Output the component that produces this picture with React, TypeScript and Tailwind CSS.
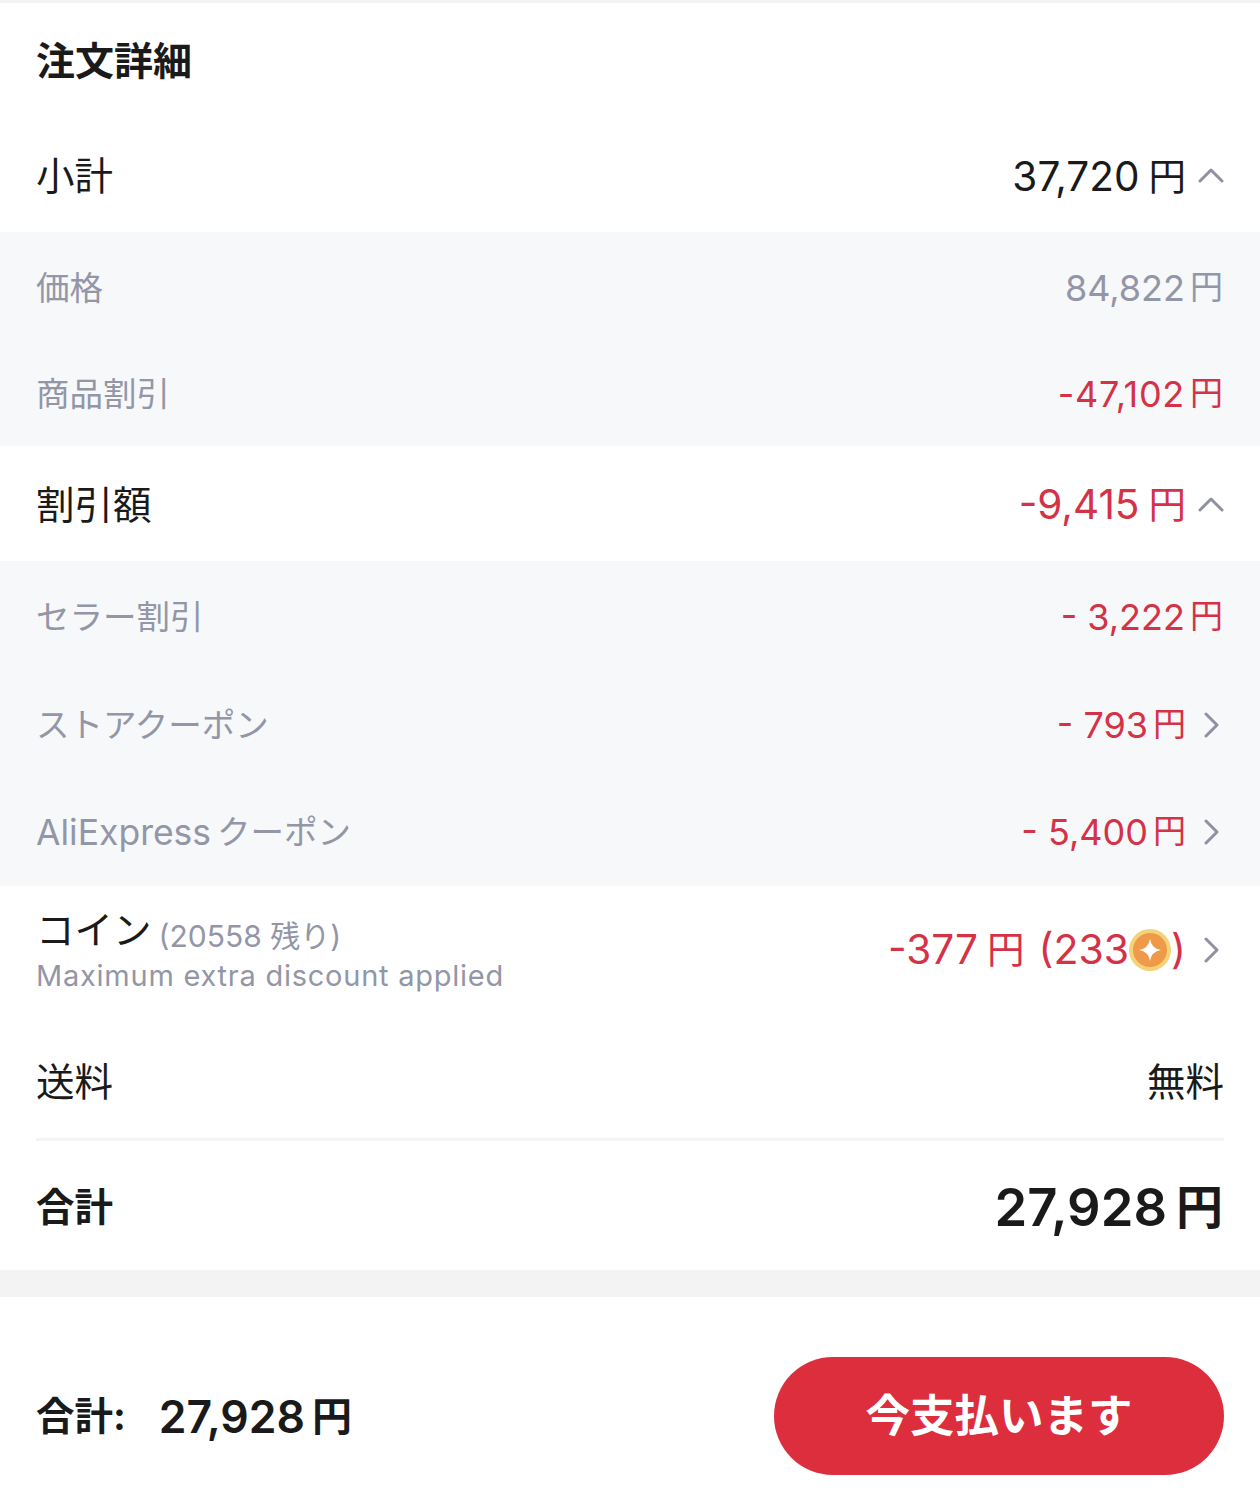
import React from "react";

const font = { fontFamily: '"Inter", "Noto Sans CJK JP", sans-serif' };

function Chevron({ dir }: { dir: "up" | "right" }) {
  return (
    <svg width="26" height="26" viewBox="0 0 26 26" fill="none" stroke="#8f91a3" strokeWidth="3" strokeLinecap="round" strokeLinejoin="round" className={`shrink-0 ${dir === "up" ? "ml-[12px] mb-[4px] mr-[-1px]" : "ml-[12px] mr-[-1px]"}`}>
      {dir === "up" ? <path d="M2 19 L13 8 L24 19" /> : <path d="M8 2 L19 13 L8 24" />}
    </svg>
  );
}

function Yen({ n, big, wide }: { n: string; big?: boolean; wide?: boolean }) {
  return (
    <>
      <span className={`${big ? "text-[40.5px]" : "text-[36px]"} ${wide ? "tracking-[0.7px]" : ""}`}>{n}</span>
      <span className={big ? "text-[37.5px] ml-[9px]" : "text-[33px] ml-[5px]"}>円</span>
    </>
  );
}

function Sub({ label, latin, value, red, chevron, wide, h }: { label: string; latin?: string; value: string; red?: boolean; chevron?: boolean; wide?: boolean; h: string }) {
  return (
    <div className={`flex items-center justify-between pl-[36px] pr-[37px] pt-[2px] ${h}`}>
      <span className="text-[33.5px] text-[#9396a6] flex items-center">
        {latin && <span className="text-[35.5px] mr-[6px]">{latin}</span>}
        {label}
      </span>
      <span className={`flex items-center mb-[1px] ${red ? "text-[#d43247]" : "text-[#9396a6]"}`}>
        <Yen n={value} wide={wide} />
        {chevron && <Chevron dir="right" />}
      </span>
    </div>
  );
}

export default function App() {
  return (
    <div style={font} className="w-[1260px] h-[1512px] bg-white text-[#1a1a1a] overflow-hidden">
      <div className="h-[3px] bg-[#f3f3f3]" />
      <div className="h-[117px] pl-[36px] flex items-center text-[39px] font-bold">注文詳細</div>

      <div className="h-[112px] pl-[36px] pr-[37px] pt-[2px] flex items-center justify-between">
        <span className="text-[38.5px]">小計</span>
        <span className="flex items-center"><Yen n="37,720" big /><Chevron dir="up" /></span>
      </div>

      <div className="bg-[#f7f8fa] pt-[3px]">
        <Sub label="価格" value="84,822" h="h-[105px]" />
        <Sub label="商品割引" value="-47,102" red wide h="h-[106px]" />
      </div>

      <div className="h-[115px] pl-[36px] pr-[37px] pt-[4px] flex items-center justify-between">
        <span className="text-[38.5px]">割引額</span>
        <span className="flex items-center text-[#d43247]"><Yen n="-9,415" big /><Chevron dir="up" /></span>
      </div>

      <div className="bg-[#f7f8fa]">
        <Sub label="セラー割引" value="- 3,222" h="h-[110px]" red />
        <Sub label="ストアクーポン" value="- 793" red chevron h="h-[106px]" />
        <Sub label="クーポン" latin="AliExpress" value="- 5,400" red chevron h="h-[109px]" />
      </div>

      <div className="h-[134px] pl-[36px] pr-[37px] pb-[6px] flex items-center justify-between">
        <div className="flex flex-col">
          <div className="flex items-center h-[50px]">
            <span className="text-[38.5px]">コイン</span>
            <span className="text-[30px] text-[#9396a6] ml-[7px] pt-[11px]">(20558 残り)</span>
          </div>
          <span className="text-[29px] leading-[38px] tracking-[0.75px] text-[#9396a6] mt-[1px]">Maximum extra discount applied</span>
        </div>
        <span className="flex items-center text-[#d43247]">
          <Yen n="-377" big />
          <span className="text-[41px] ml-[14px]">(233</span>
          <svg width="42" height="42" viewBox="0 0 42 42" className="shrink-0">
            <circle cx="21" cy="21" r="21" fill="#f4d27a" />
            <circle cx="21" cy="21" r="17" fill="#ef9a48" />
            <path d="M21 10 Q22.5 19.5 32 21 Q22.5 22.5 21 32 Q19.5 22.5 10 21 Q19.5 19.5 21 10 Z" fill="#fff" />
          </svg>
          <span className="text-[41px]">)</span>
          <Chevron dir="right" />
        </span>
      </div>

      <div className="h-[121px] ml-[36px] mr-[36px] pt-[7px] flex items-center justify-between border-b-[3px] border-[#f3f4f6]">
        <span className="text-[38.5px]">送料</span>
        <span className="text-[38.5px]">無料</span>
      </div>

      <div className="h-[129px] pl-[36px] pr-[37px] pt-[4px] flex items-center justify-between">
        <span className="text-[38.5px] font-bold">合計</span>
        <span className="font-semibold flex items-center">
          <span className="text-[52.5px]">27,928</span>
          <span className="text-[47px] ml-[9px] font-bold">円</span>
        </span>
      </div>

      <div className="h-[27px] bg-[#f3f3f3]" />

      <div className="h-[215px] pl-[36px] pr-[36px] pt-[60px] flex items-start justify-between">
        <span className="h-[118px] pt-[2px] flex items-center font-semibold">
          <span className="text-[38.5px] font-bold">合計:</span>
          <span className="text-[44.5px] ml-[33px]">27,928</span>
          <span className="text-[40px] ml-[7px] font-bold">円</span>
        </span>
        <button className="w-[450px] h-[118px] rounded-[59px] bg-[#dd2e3e] text-white text-[44.5px] font-bold flex items-center justify-center">
          今支払います
        </button>
      </div>
    </div>
  );
}
